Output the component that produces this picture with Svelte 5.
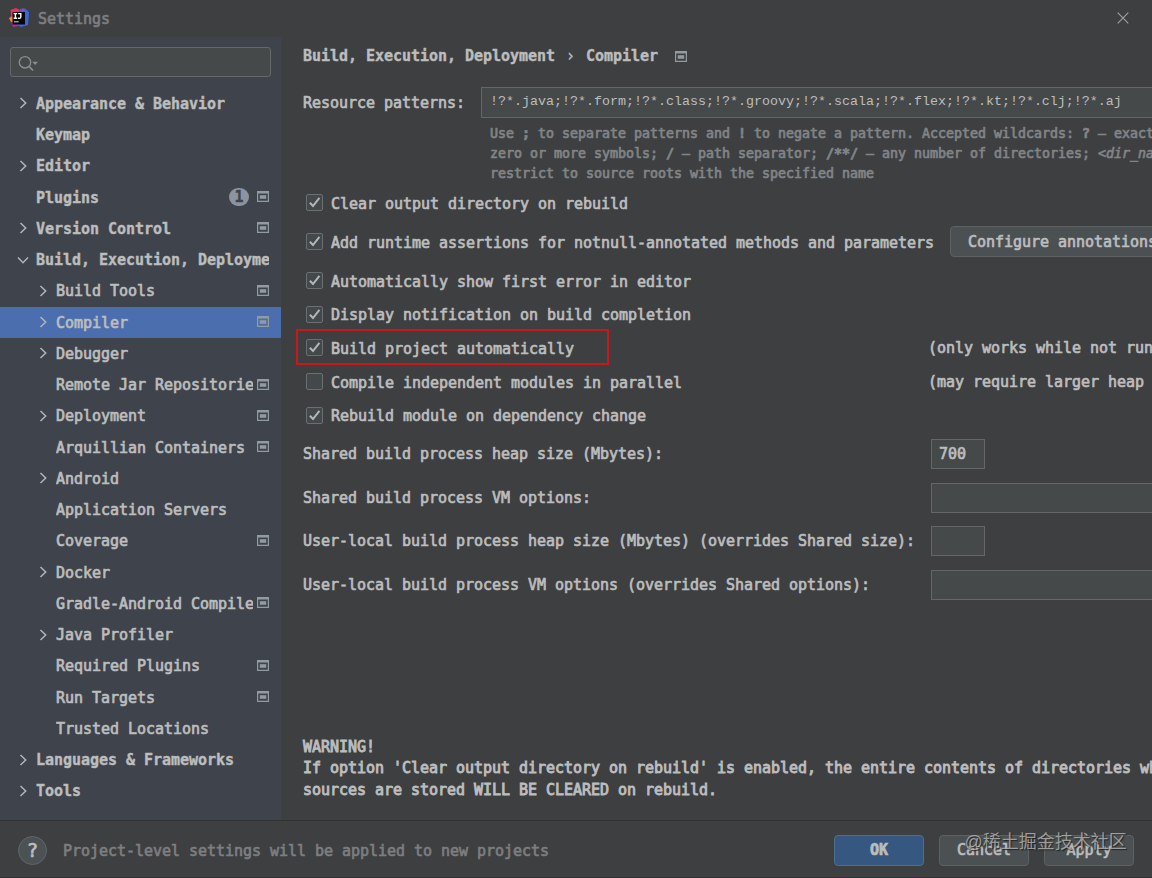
<script>
    const tree = [
        { label: "Appearance & Behavior", level: 0, arrow: "right" },
        { label: "Keymap", level: 0 },
        { label: "Editor", level: 0, arrow: "right" },
        { label: "Plugins", level: 0, badge: 1, project: true },
        { label: "Version Control", level: 0, arrow: "right", project: true },
        { label: "Build, Execution, Deployment", level: 0, arrow: "down" },
        { label: "Build Tools", level: 1, arrow: "right", project: true },
        { label: "Compiler", level: 1, arrow: "right", project: true },
        { label: "Debugger", level: 1, arrow: "right" },
        { label: "Remote Jar Repositories", level: 1, project: true },
        { label: "Deployment", level: 1, arrow: "right", project: true },
        { label: "Arquillian Containers", level: 1, project: true },
        { label: "Android", level: 1, arrow: "right" },
        { label: "Application Servers", level: 1 },
        { label: "Coverage", level: 1, project: true },
        { label: "Docker", level: 1, arrow: "right" },
        { label: "Gradle-Android Compiler", level: 1, project: true },
        { label: "Java Profiler", level: 1, arrow: "right" },
        { label: "Required Plugins", level: 1, project: true },
        { label: "Run Targets", level: 1, project: true },
        { label: "Trusted Locations", level: 1 },
        { label: "Languages & Frameworks", level: 0, arrow: "right" },
        { label: "Tools", level: 0, arrow: "right" },
    ];

    let selected = $state("Compiler");

    let options = $state([
        { label: "Clear output directory on rebuild", on: true, tall: true },
        { label: "Add runtime assertions for notnull-annotated methods and parameters", on: true, tall: true, button: "Configure annotations..." },
        { label: "Automatically show first error in editor", on: true },
        { label: "Display notification on build completion", on: true },
        { label: "Build project automatically", on: true, marked: true, note: "(only works while not running / debugging)" },
        { label: "Compile independent modules in parallel", on: false, note: "(may require larger heap size)" },
        { label: "Rebuild module on dependency change", on: true },
    ]);

    const fields = [
        { label: "Shared build process heap size (Mbytes):", value: "700", small: true },
        { label: "Shared build process VM options:", value: "" },
        { label: "User-local build process heap size (Mbytes) (overrides Shared size):", value: "", small: true },
        { label: "User-local build process VM options (overrides Shared options):", value: "" },
    ];
</script>

{#snippet projectIcon()}
    <svg class="project" width="12" height="11" viewBox="0 0 12 11">
        <path d="M0 0H12V11H0ZM1.2 2.6V9.8H10.8V2.6Z" fill="currentColor" fill-rule="evenodd" />
        <rect x="2.8" y="4.2" width="6.4" height="3.6" fill="currentColor" />
    </svg>
{/snippet}

<div class="window">
    <header>
        <svg width="20" height="20" viewBox="0 0 20 20">
            <path d="M1.5 2 7 0 11 2 9 9 3 13 0 11 2 8Z" fill="#ec2f63" />
            <path d="M0 10 4 8 5 15 2 14Z" fill="#f58a32" />
            <path d="M2 14 8 13 10 18 4 19Z" fill="#a52fa5" />
            <path d="M11 1 16 0.5 20 4 19 17 12 19 8 17 13 12Z" fill="#3c67dc" />
            <path d="M12 1 15 0.5 16 5 11 5Z" fill="#7550cf" />
            <rect x="3.5" y="4" width="12.5" height="12.5" fill="#08080a" />
            <path d="M4.6 5.6H8.2M6.4 5.6V10.3M4.6 10.3H8.2M9.2 5.6H11.8V9.1Q11.8 10.3 10.6 10.3H9" fill="none" stroke="#fff" stroke-width="1.4" />
            <rect x="5" y="13.3" width="4.7" height="1" fill="#ddd" />
        </svg>
        <span>Settings</span>
        <svg class="close" width="12" height="12" viewBox="0 0 12 12">
            <path d="M.7.7 11.3 11.3M11.3.7.7 11.3" stroke="#9c9fa0" stroke-width="1.2" />
        </svg>
    </header>

    <div class="body">
        <aside>
            <div class="search">
                <svg width="22" height="18" viewBox="0 0 22 18">
                    <circle cx="7" cy="7.3" r="5.7" fill="none" stroke="#8b8e90" stroke-width="1.3" />
                    <path d="M11 11.4 15 15.5" stroke="#8b8e90" stroke-width="1.7" />
                    <path d="M14.2 6.8H20L17.1 10Z" fill="#8b8e90" />
                </svg>
            </div>
            <nav>
                {#each tree as item}
                    <div
                        class="node"
                        class:child={item.level === 1}
                        class:selected={item.label === selected}
                        role="presentation"
                        onclick={() => (selected = item.label)}
                    >
                        <span class="arrow">
                            {#if item.arrow === "right"}
                                <svg width="12" height="12" viewBox="0 0 12 12">
                                    <path d="M3.5 1 8.7 6 3.5 11" />
                                </svg>
                            {:else if item.arrow === "down"}
                                <svg width="12" height="12" viewBox="0 0 12 12">
                                    <path d="M1 3.5 6 8.7 11 3.5" />
                                </svg>
                            {/if}
                        </span>
                        <span class="label">{item.label}</span>
                        {#if item.badge}
                            <span class="badge">{item.badge}</span>
                        {/if}
                        {#if item.project}
                            {@render projectIcon()}
                        {/if}
                    </div>
                {/each}
            </nav>
        </aside>

        <main>
            <h1>
                <span>Build, Execution, Deployment</span>
                <i>›</i>
                <span>Compiler</span>
                {@render projectIcon()}
            </h1>

            <div class="patterns">
                <span>Resource patterns:</span>
                <div class="input simsun">!?*.java;!?*.form;!?*.class;!?*.groovy;!?*.scala;!?*.flex;!?*.kt;!?*.clj;!?*.aj</div>
            </div>
            <div class="hint">
                <div>Use <b>;</b> to separate patterns and <b>!</b> to negate a pattern. Accepted wildcards: <b>?</b> — exactly one symbol; <b>*</b> —</div>
                <div>zero or more symbols; <b>/</b> — path separator; <b>/**/</b> — any number of directories; <em>&lt;dir_name&gt;</em>:<em>&lt;pattern&gt;</em> —</div>
                <div>restrict to source roots with the specified name</div>
            </div>

            <div class="options">
                {#each options as option}
                    <div class="option" class:tall={option.tall}>
                        <button class="check" aria-label={option.label} onclick={() => (option.on = !option.on)}>
                            {#if option.on}
                                <svg width="15" height="15" viewBox="0 0 15 15">
                                    <path d="M2.9 7.7 6 11 12.4 2.9" />
                                </svg>
                            {/if}
                        </button>
                        <span class="text">{option.label}</span>
                        {#if option.button}
                            <button class="btn configure">{option.button}</button>
                        {/if}
                        {#if option.note}
                            <span class="note">{option.note}</span>
                        {/if}
                        {#if option.marked}
                            <span class="mark"></span>
                        {/if}
                    </div>
                {/each}
            </div>

            <div class="fields">
                {#each fields as field}
                    <span>{field.label}</span>
                    <div class="input" class:small={field.small}>{field.value}</div>
                {/each}
            </div>

            <div class="warning">
                <div>WARNING!</div>
                <div>If option 'Clear output directory on rebuild' is enabled, the entire contents of directories where generated</div>
                <div>sources are stored WILL BE CLEARED on rebuild.</div>
            </div>
        </main>
    </div>

    <footer>
        <span class="help">?</span>
        <span class="status">Project-level settings will be applied to new projects</span>
        <button class="btn ok">OK</button>
        <button class="btn">Cancel</button>
        <button class="btn">Apply</button>
        <span class="watermark">@稀土掘金技术社区</span>
    </footer>
</div>

<style>
    :global(body) {
        margin: 0;
        background: #3d3f41;
    }

    .window {
        width: 1152px;
        height: 878px;
        display: flex;
        flex-direction: column;
        box-sizing: border-box;
        overflow: hidden;
        border-bottom: 1px solid #2f3132;
        background: #3d3f41;
        color: #bcbdbd;
        font: 15px/20px "DejaVu Sans Mono", monospace;
        letter-spacing: -0.03px;
        white-space: nowrap;
        -webkit-text-stroke: 0.7px;
    }

    svg {
        display: block;
        flex: none;
    }

    header {
        height: 37px;
        display: flex;
        align-items: center;
        padding: 0 23px 1px 9px;
        box-sizing: border-box;
        color: #7c7e7f;
    }

    header span {
        flex: 1;
        margin-left: 9px;
        padding-top: 2px;
    }

    .body {
        flex: 1;
        display: flex;
        min-height: 0;
    }

    /* Sidebar */
    aside {
        width: 281px;
        flex: none;
        background: #3f444c;
    }

    .search {
        height: 30px;
        margin: 10px 10px 0;
        padding: 3px 0 0 7px;
        display: flex;
        align-items: center;
        box-sizing: border-box;
        border: 1px solid #65696a;
        border-radius: 3px;
        background: #45494a;
    }

    nav {
        margin-top: 11.2px;
    }

    .node {
        height: 31.25px;
        display: flex;
        align-items: center;
        padding: 0 12px 0 17px;
        font-weight: bold;
        -webkit-text-stroke: 0.4px;
    }

    .node.child {
        padding-left: 37px;
        font-weight: normal;
        -webkit-text-stroke: 0.7px;
    }

    .node.selected {
        background: #4b6eaf;
    }

    .arrow {
        width: 19px;
        flex: none;
        padding-bottom: 1px;
    }

    .arrow path {
        fill: none;
        stroke: #b2b5b8;
        stroke-width: 1.5;
    }

    .label {
        flex: 1;
        overflow: hidden;
    }

    .project {
        color: #929aa2;
    }

    .node .project {
        margin: 0 0 2px 4px;
    }

    .badge {
        width: 20px;
        height: 18px;
        margin: 0 4px 1px 0;
        border-radius: 9px;
        background: #8c949e;
        color: #3f444c;
        line-height: 18px;
        text-align: center;
    }

    /* Settings page */
    main {
        flex: 1;
        min-width: 0;
        padding: 9px 0 0 22px;
        overflow: hidden;
    }

    h1 {
        height: 20px;
        margin: 0;
        display: flex;
        align-items: center;
        font-size: 15px;
        -webkit-text-stroke: 0.4px;
    }

    h1 i {
        width: 31px;
        font-style: normal;
        font-weight: normal;
        text-align: center;
    }

    h1 .project {
        margin-left: 17px;
    }

    .patterns {
        height: 31px;
        margin-top: 21px;
        display: flex;
        align-items: center;
    }

    .patterns span {
        width: 178px;
        flex: none;
    }

    .input {
        height: 30px;
        flex: 1;
        padding-left: 7px;
        box-sizing: border-box;
        border: 1px solid #646768;
        border-right: 0;
        background: #45494a;
        line-height: 28px;
    }

    .simsun {
        height: 31px;
        padding-left: 8px;
        font: 13.33px/28px "Liberation Mono", monospace;
        letter-spacing: 0;
        -webkit-text-stroke: 0;
    }

    .hint {
        height: 60px;
        margin: 6px 0 0 187px;
        color: #828485;
        font-size: 13.3px;
        letter-spacing: -0.007px;
    }

    .option {
        position: relative;
        height: 33.6px;
        display: flex;
        align-items: center;
        padding-left: 3px;
    }

    .option.tall {
        height: 39px;
    }

    .options {
        margin-top: -1px;
    }

    .option.tall + .option:not(.tall) {
        margin-top: 3px;
    }

    .check {
        width: 17px;
        height: 17px;
        flex: none;
        padding: 0;
        border: 1px solid #6b6f70;
        border-radius: 2px;
        background: #43494a;
    }

    .check path {
        fill: none;
        stroke: #b4b6b7;
        stroke-width: 2;
    }

    .text {
        flex: none;
        margin-left: 8px;
        padding-top: 2px;
    }

    .note {
        position: absolute;
        left: 625px;
    }

    .mark {
        position: absolute;
        left: -7px;
        top: -2px;
        width: 309px;
        height: 32px;
        border: 2px solid #c9171b;
    }

    .btn {
        width: 90px;
        height: 31px;
        flex: none;
        padding: 0;
        border: 1px solid #5d6162;
        border-radius: 4px;
        background: #4b5052;
        color: #bcbdbd;
        font: inherit;
        letter-spacing: inherit;
        -webkit-text-stroke: 0.7px;
    }

    .configure {
        width: 252px;
        margin-left: 16px;
        padding-top: 1px;
    }

    .fields {
        display: grid;
        grid-template-columns: 628px 1fr;
        grid-auto-rows: 43.8px;
        align-items: center;
    }

    .input.small {
        width: 54px;
        border-right: 1px solid #646768;
    }

    .warning {
        margin-top: 130px;
        line-height: 21.3px;
        -webkit-text-stroke: 0.9px;
    }

    /* Bottom bar */
    footer {
        position: relative;
        height: 57px;
        flex: none;
        display: flex;
        align-items: center;
        gap: 15px;
        box-sizing: border-box;
        padding: 2px 18px 0;
        border-top: 1px solid #303233;
    }

    .help {
        width: 27px;
        height: 27px;
        border: 1px solid #61676a;
        border-radius: 50%;
        background: #4c5153;
        font-size: 19px;
        line-height: 27px;
        text-align: center;
    }

    .status {
        flex: 1;
        margin-left: 1px;
        padding-top: 2px;
        color: #7c7e7f;
    }

    .ok {
        border-color: #4c708c;
        background: #365880;
        font-weight: bold;
    }

    .watermark {
        position: absolute;
        left: 964.5px;
        top: 8px;
        color: rgba(190, 190, 190, 0.75);
        font: 18px/26px "Liberation Sans", "Noto Sans CJK SC", sans-serif;
        letter-spacing: 0;
        text-shadow: 1px 1px 1px #222;
        pointer-events: none;
        -webkit-text-stroke: 0;
    }
</style>
